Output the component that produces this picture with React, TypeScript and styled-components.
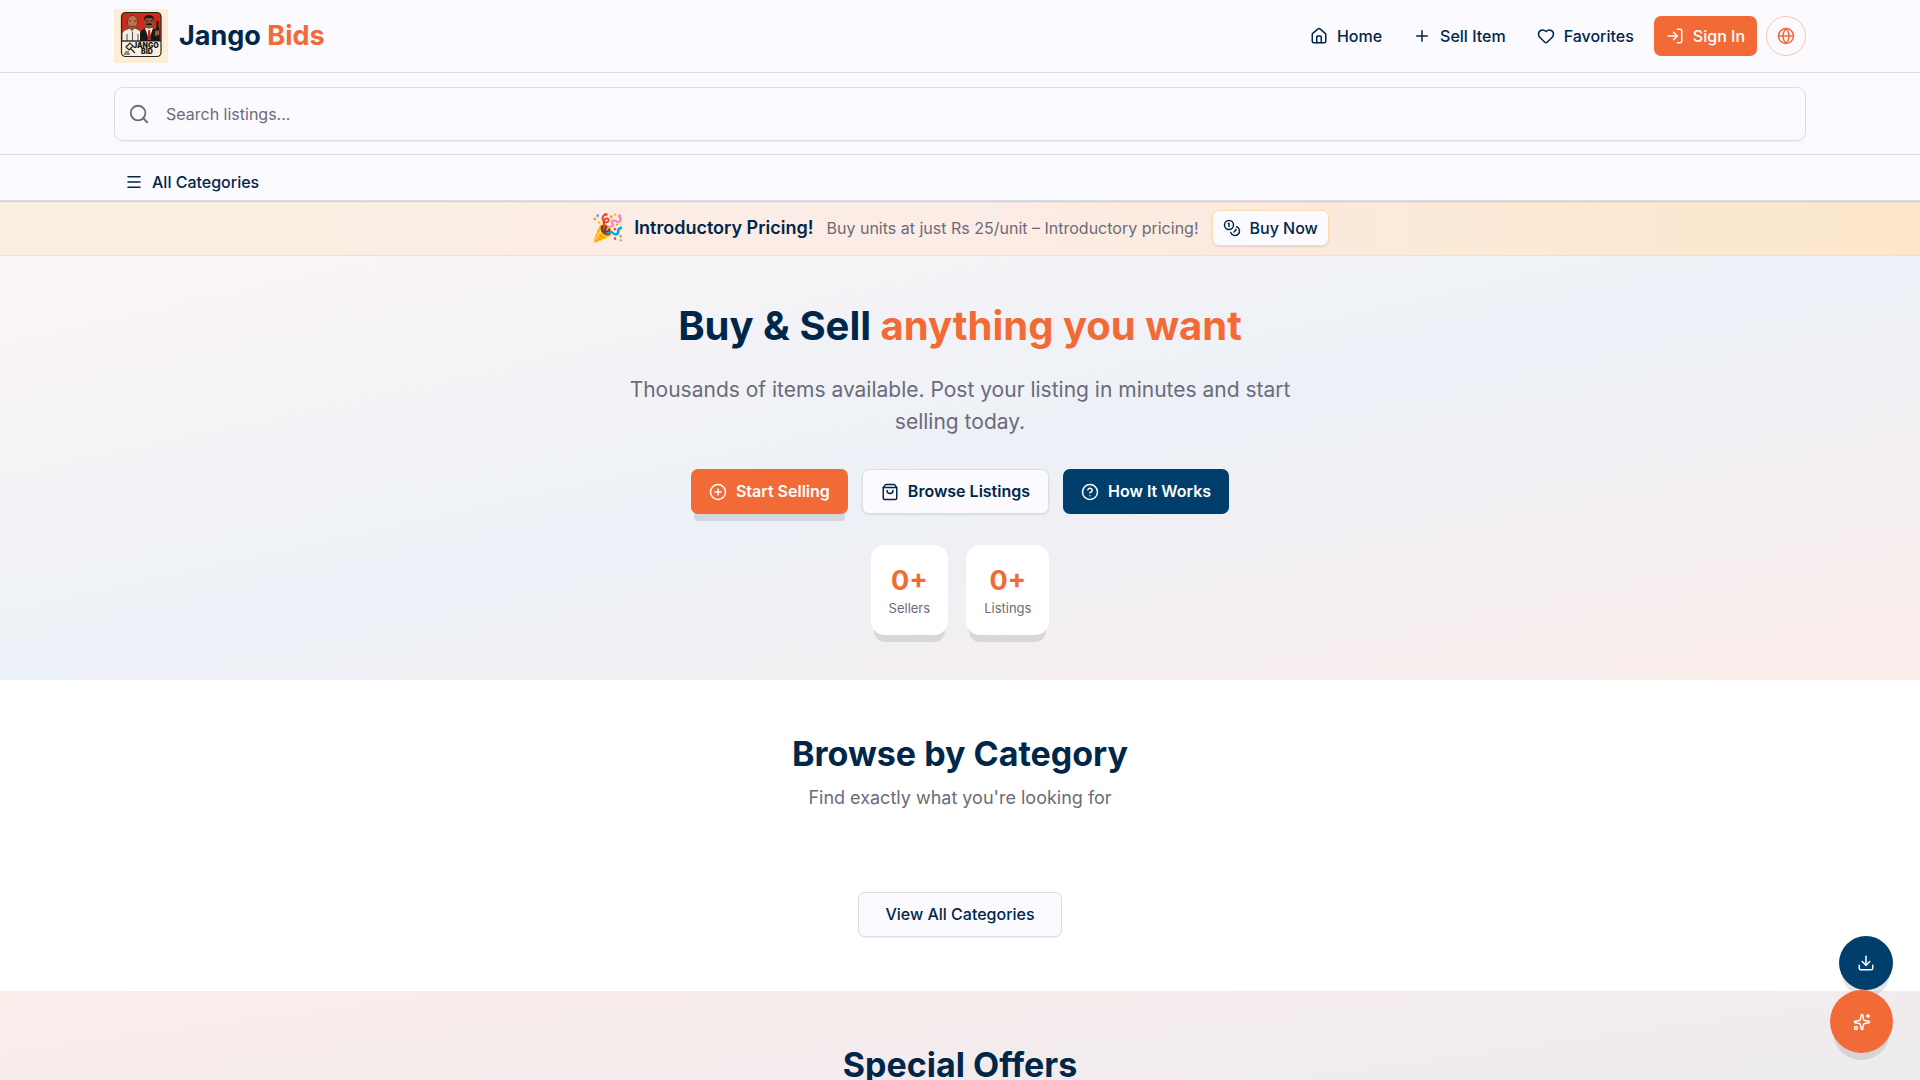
import React from "react";
import styled, { createGlobalStyle, css } from "styled-components";
import {
  House, Plus, Heart, LogIn, Globe, Search, Menu, Coins, CirclePlus,
  ShoppingBag, CircleHelp, Download,
} from "lucide-react";

const c = {
  navy: "#00274a",
  deep: "#003f6b",
  orange: "#f26b36",
  muted: "#6b6b7a",
  surface: "#fbfaff",
  line: "#dcdce4",
};

const Global = createGlobalStyle`
  *, *::before, *::after { box-sizing: border-box; }
  body {
    margin: 0;
    background: #fff;
    color: ${c.navy};
    font-family: Inter, "Liberation Sans", sans-serif;
    font-size: 16px;
    line-height: 23px;
    overflow: hidden;
  }
  h1, h2, p { margin: 0; }
  a { color: inherit; text-decoration: none; }
  button, input { font: inherit; color: inherit; }
`;

const Page = styled.div`
  height: 100vh;
  overflow: hidden;
`;

const Container = styled.div`
  max-width: 1728px;
  margin: 0 auto;
  padding: 0 18px;
`;

const Header = styled.header`
  background: ${c.surface};
  border-bottom: 1px solid ${c.line};
  box-shadow: 0 1px 1px rgba(0, 0, 0, 0.12);
  position: relative;
`;

const TopRow = styled(Container)`
  display: flex;
  align-items: center;
  justify-content: space-between;
  height: 72px;
`;

const Brand = styled.a`
  display: flex;
  align-items: center;
  gap: 11px;
  font-size: 27px;
  line-height: 36px;
  font-weight: 700;
`;

const Accent = styled.span`
  color: ${c.orange};
`;

const Nav = styled.nav`
  display: flex;
  align-items: center;
  gap: 9px;
`;

const NavLink = styled.a`
  display: flex;
  align-items: center;
  gap: 9px;
  padding: 0 11px;
  height: 40px;
  font-weight: 500;
`;

const buttonBase = css`
  display: inline-flex;
  align-items: center;
  justify-content: center;
  gap: 9px;
  border: 0;
  border-radius: 7px;
  cursor: pointer;
`;

const SignIn = styled.button`
  ${buttonBase}
  height: 40px;
  padding: 0 12px;
  background: ${c.orange};
  color: #fff;
  font-weight: 500;
`;

const LangButton = styled.button`
  ${buttonBase}
  width: 40px;
  height: 40px;
  padding: 0;
  border: 1px solid #fac6b4;
  border-radius: 50%;
  background: transparent;
  color: ${c.orange};
`;

const SearchRow = styled.div`
  border-top: 1px solid ${c.line};
  border-bottom: 1px solid ${c.line};
  padding: 14px 0 13px;
`;

const SearchBox = styled.label`
  display: flex;
  align-items: center;
  gap: 16px;
  height: 54px;
  padding: 0 13px;
  border: 1px solid ${c.line};
  border-radius: 9px;
  box-shadow: 0 1px 1px rgba(0, 0, 0, 0.05);
  color: ${c.muted};
`;

const SearchInput = styled.input`
  flex: 1;
  border: 0;
  outline: 0;
  padding: 0;
  background: transparent;
  &::placeholder { color: ${c.muted}; opacity: 1; }
`;

const CategoryButton = styled.button`
  ${buttonBase}
  height: 36px;
  margin-top: 9px;
  padding: 0 11px;
  background: transparent;
  font-weight: 500;
`;

const Promo = styled.section`
  display: flex;
  align-items: center;
  justify-content: center;
  flex-wrap: wrap;
  gap: 13px;
  padding: 9px 18px;
  border-bottom: 1px solid #fbdfb5;
  background: linear-gradient(90deg, #fbefe2, #fbece6 50%, #fce7cb);
`;

const PromoTitle = styled.strong`
  display: flex;
  align-items: center;
  gap: 9px;
  font-size: 18px;
  line-height: 28px;
  font-weight: 600;
`;

const Muted = styled.span`
  color: ${c.muted};
`;

const BuyNow = styled.button`
  ${buttonBase}
  height: 36px;
  padding: 0 10px;
  border: 1px solid #fcdcae;
  background: ${c.surface};
  box-shadow: 0 1px 2px rgba(0, 0, 0, 0.1);
  font-weight: 500;
`;

const Hero = styled.section`
  display: flex;
  flex-direction: column;
  align-items: center;
  padding: 45px 18px;
  text-align: center;
  background: linear-gradient(to bottom right, #fcf5f5, #ecf1f7 50%, #fbecea);
`;

const HeroTitle = styled.h1`
  font-size: 40px;
  line-height: 50px;
  font-weight: 700;
`;

const HeroText = styled.p`
  max-width: 756px;
  margin-top: 23px;
  padding: 0 36px;
  font-size: 21px;
  line-height: 32px;
  color: ${c.muted};
`;

const Row = styled.div<{ $gap: number }>`
  display: flex;
  flex-wrap: wrap;
  justify-content: center;
  gap: ${(p) => p.$gap}px;
  margin-top: 31px;
`;

const tones = {
  primary: css`
    background: ${c.orange};
    color: #fff;
    box-shadow: 0 10px 0 -3px rgba(0, 0, 0, 0.1);
  `,
  outline: css`
    background: ${c.surface};
    border: 1px solid ${c.line};
    box-shadow: 0 1px 2px rgba(0, 0, 0, 0.1);
  `,
  deep: css`
    background: ${c.deep};
    color: #fff;
  `,
};

const ActionButton = styled.button<{ $tone: keyof typeof tones }>`
  ${buttonBase}
  height: 45px;
  padding: 0 18px;
  font-weight: 600;
  ${(p) => tones[p.$tone]}
`;

const Stat = styled.div`
  padding: 18px;
  border-radius: 14px;
  background: #fff;
  box-shadow: 0 10px 0 -3px rgba(0, 0, 0, 0.1);
  font-size: 13px;
  line-height: 18px;
  color: ${c.muted};
`;

const StatValue = styled.div`
  font-size: 27px;
  line-height: 36px;
  font-weight: 700;
  color: ${c.orange};
`;

const Section = styled.section<{ $tinted?: boolean }>`
  padding: 54px 18px;
  text-align: center;
  background: ${(p) => (p.$tinted ? "linear-gradient(to bottom right, #fbecea, #e6ebf1)" : "#fff")};
`;

const SectionTitle = styled.h2`
  font-size: 34px;
  line-height: 40px;
  font-weight: 700;
`;

const SectionText = styled.p`
  margin-top: 10px;
  margin-bottom: 80px;
  font-size: 18px;
  line-height: 28px;
  color: ${c.muted};
`;

const OfferList = styled.div`
  min-height: 120px;
`;

const ViewAll = styled.button`
  ${buttonBase}
  height: 45px;
  padding: 0 26px;
  border: 1px solid ${c.line};
  background: ${c.surface};
  box-shadow: 0 1px 1px rgba(0, 0, 0, 0.05);
  font-weight: 500;
`;

const FabStack = styled.div`
  position: fixed;
  right: 27px;
  bottom: 27px;
  display: flex;
  flex-direction: column;
  align-items: flex-end;
`;

const Fab = styled.button<{ $size: number; $bg: string }>`
  ${buttonBase}
  width: ${(p) => p.$size}px;
  height: ${(p) => p.$size}px;
  padding: 0;
  border-radius: 50%;
  color: #fff;
  background: ${(p) => p.$bg};
  box-shadow: 0 10px 0 -3px rgba(0, 0, 0, 0.1);
`;

const LogoText = styled.text`
  font: 900 7px Inter, "Liberation Sans", sans-serif;
  fill: #17191a;
`;

const Logo = () => (
  <svg width="54" height="54" viewBox="0 0 54 54" aria-hidden="true">
    <rect width="54" height="54" fill="#fbedd6" />
    <rect x="7.5" y="3.5" width="39.5" height="44" rx="4" fill="#faf0dc" />
    <path d="M7.5 32V7.5a4 4 0 0 1 4-4H43a4 4 0 0 1 4 4V32z" fill="#c92c1c" />
    <path d="M8 32v-8q1-3 8-5h5q6 2 7 6v7z" fill="#f1eee6" stroke="#29231f" strokeWidth=".7" />
    <path d="M14 17l4 6 4-6z" fill="#b06c45" />
    <ellipse cx="18.5" cy="13" rx="5" ry="6.6" fill="#bd7547" stroke="#3b2118" strokeWidth=".6" />
    <path d="M15 12h2m3 0h2M16 17q2.500 1.500 5 0M18.500 23v9M13 25v7M24 25v7" stroke="#3b2118" strokeWidth=".8" fill="none" />
    <path d="M26 32v-8q1-3 6-5h6q5 2 7 5l1 8z" fill="#15181c" />
    <path d="M31 19l4 12 4-12z" fill="#f4efe6" />
    <path d="M34.200 21h2l.8 10h-3.500z" fill="#c3281d" />
    <ellipse cx="35" cy="13.500" rx="4.800" ry="6.200" fill="#8c4f32" />
    <path d="M30 12q-.5-6 5-6t5 6l-2-3h-6zM32 15q3-1.500 6 0v1h-6z" fill="#1e1512" />
    <path d="M32 12h2m2.500 0h2" stroke="#1e1512" strokeWidth=".8" />
    <path d="M42.500 12h2v6l1 2v8h-4v-8l1-2z" fill="#201613" />
    <path d="M41 22l4-1v5l-4 1z" fill="#9c5b39" />
    <path d="M7.500 32h39.500" stroke="#17191a" />
    <rect x="7.500" y="3.500" width="39.500" height="44" rx="4" fill="none" stroke="#292622" strokeWidth="1.200" />
    <path d="M12 38l4-4 3 3-4 4zM16 39l5 5M10 45h6M11 43h4" stroke="#29231f" strokeWidth="1.200" fill="none" />
    <LogoText x="19" y="39">JANGO</LogoText>
    <LogoText x="27" y="45">BID</LogoText>
  </svg>
);

const Sparkle = () => (
  <svg width="18" height="18" viewBox="0 0 24 24" fill="none" stroke="currentColor" strokeWidth="2" strokeLinecap="round" strokeLinejoin="round" aria-hidden="true">
    <path d="M11.017 2.814a1 1 0 0 1 1.966 0l1.051 5.558a2 2 0 0 0 1.594 1.594l5.558 1.051a1 1 0 0 1 0 1.966l-5.558 1.051a2 2 0 0 0-1.594 1.594l-1.051 5.558a1 1 0 0 1-1.966 0l-1.051-5.558a2 2 0 0 0-1.594-1.594l-5.558-1.051a1 1 0 0 1 0-1.966l5.558-1.051a2 2 0 0 0 1.594-1.594z" />
    <path d="M20 2v4M22 4h-4" />
    <circle cx="4" cy="20" r="2" />
  </svg>
);

const Emoji = styled.span`
  font-size: 27px;
  line-height: 36px;
`;

export default function App() {
  return (
    <Page>
      <Global />
      <Header>
        <TopRow>
          <Brand href="#">
            <Logo />
            <span>Jango <Accent>Bids</Accent></span>
          </Brand>
          <Nav>
            <NavLink href="#home"><House size={18} />Home</NavLink>
            <NavLink href="#sell"><Plus size={18} />Sell Item</NavLink>
            <NavLink href="#favorites"><Heart size={18} />Favorites</NavLink>
            <SignIn><LogIn size={18} />Sign In</SignIn>
            <LangButton aria-label="Language"><Globe size={18} /></LangButton>
          </Nav>
        </TopRow>
        <SearchRow>
          <Container>
            <SearchBox>
              <Search size={22} />
              <SearchInput type="text" aria-label="Search listings" placeholder="Search listings..." />
            </SearchBox>
          </Container>
        </SearchRow>
        <Container>
          <CategoryButton><Menu size={18} />All Categories</CategoryButton>
        </Container>
      </Header>
      <Promo>
        <PromoTitle><Emoji>🎉</Emoji>Introductory Pricing!</PromoTitle>
        <Muted>Buy units at just Rs 25/unit – Introductory pricing!</Muted>
        <BuyNow><Coins size={18} />Buy Now</BuyNow>
      </Promo>
      <Hero>
        <HeroTitle>Buy &amp; Sell <Accent>anything you want</Accent></HeroTitle>
        <HeroText>Thousands of items available. Post your listing in minutes and start selling today.</HeroText>
        <Row $gap={14}>
          <ActionButton $tone="primary"><CirclePlus size={18} />Start Selling</ActionButton>
          <ActionButton $tone="outline"><ShoppingBag size={18} />Browse Listings</ActionButton>
          <ActionButton $tone="deep"><CircleHelp size={18} />How It Works</ActionButton>
        </Row>
        <Row $gap={18}>
          <Stat><StatValue>0+</StatValue>Sellers</Stat>
          <Stat><StatValue>0+</StatValue>Listings</Stat>
        </Row>
      </Hero>
      <Section>
        <SectionTitle>Browse by Category</SectionTitle>
        <SectionText>Find exactly what you're looking for</SectionText>
        <ViewAll>View All Categories</ViewAll>
      </Section>
      <Section $tinted>
        <SectionTitle>Special Offers</SectionTitle>
        <OfferList />
      </Section>
      <FabStack>
        <Fab $size={54} $bg={c.deep} aria-label="Download app"><Download size={18} /></Fab>
        <Fab $size={63} $bg={c.orange} aria-label="Assistant"><Sparkle /></Fab>
      </FabStack>
    </Page>
  );
}
